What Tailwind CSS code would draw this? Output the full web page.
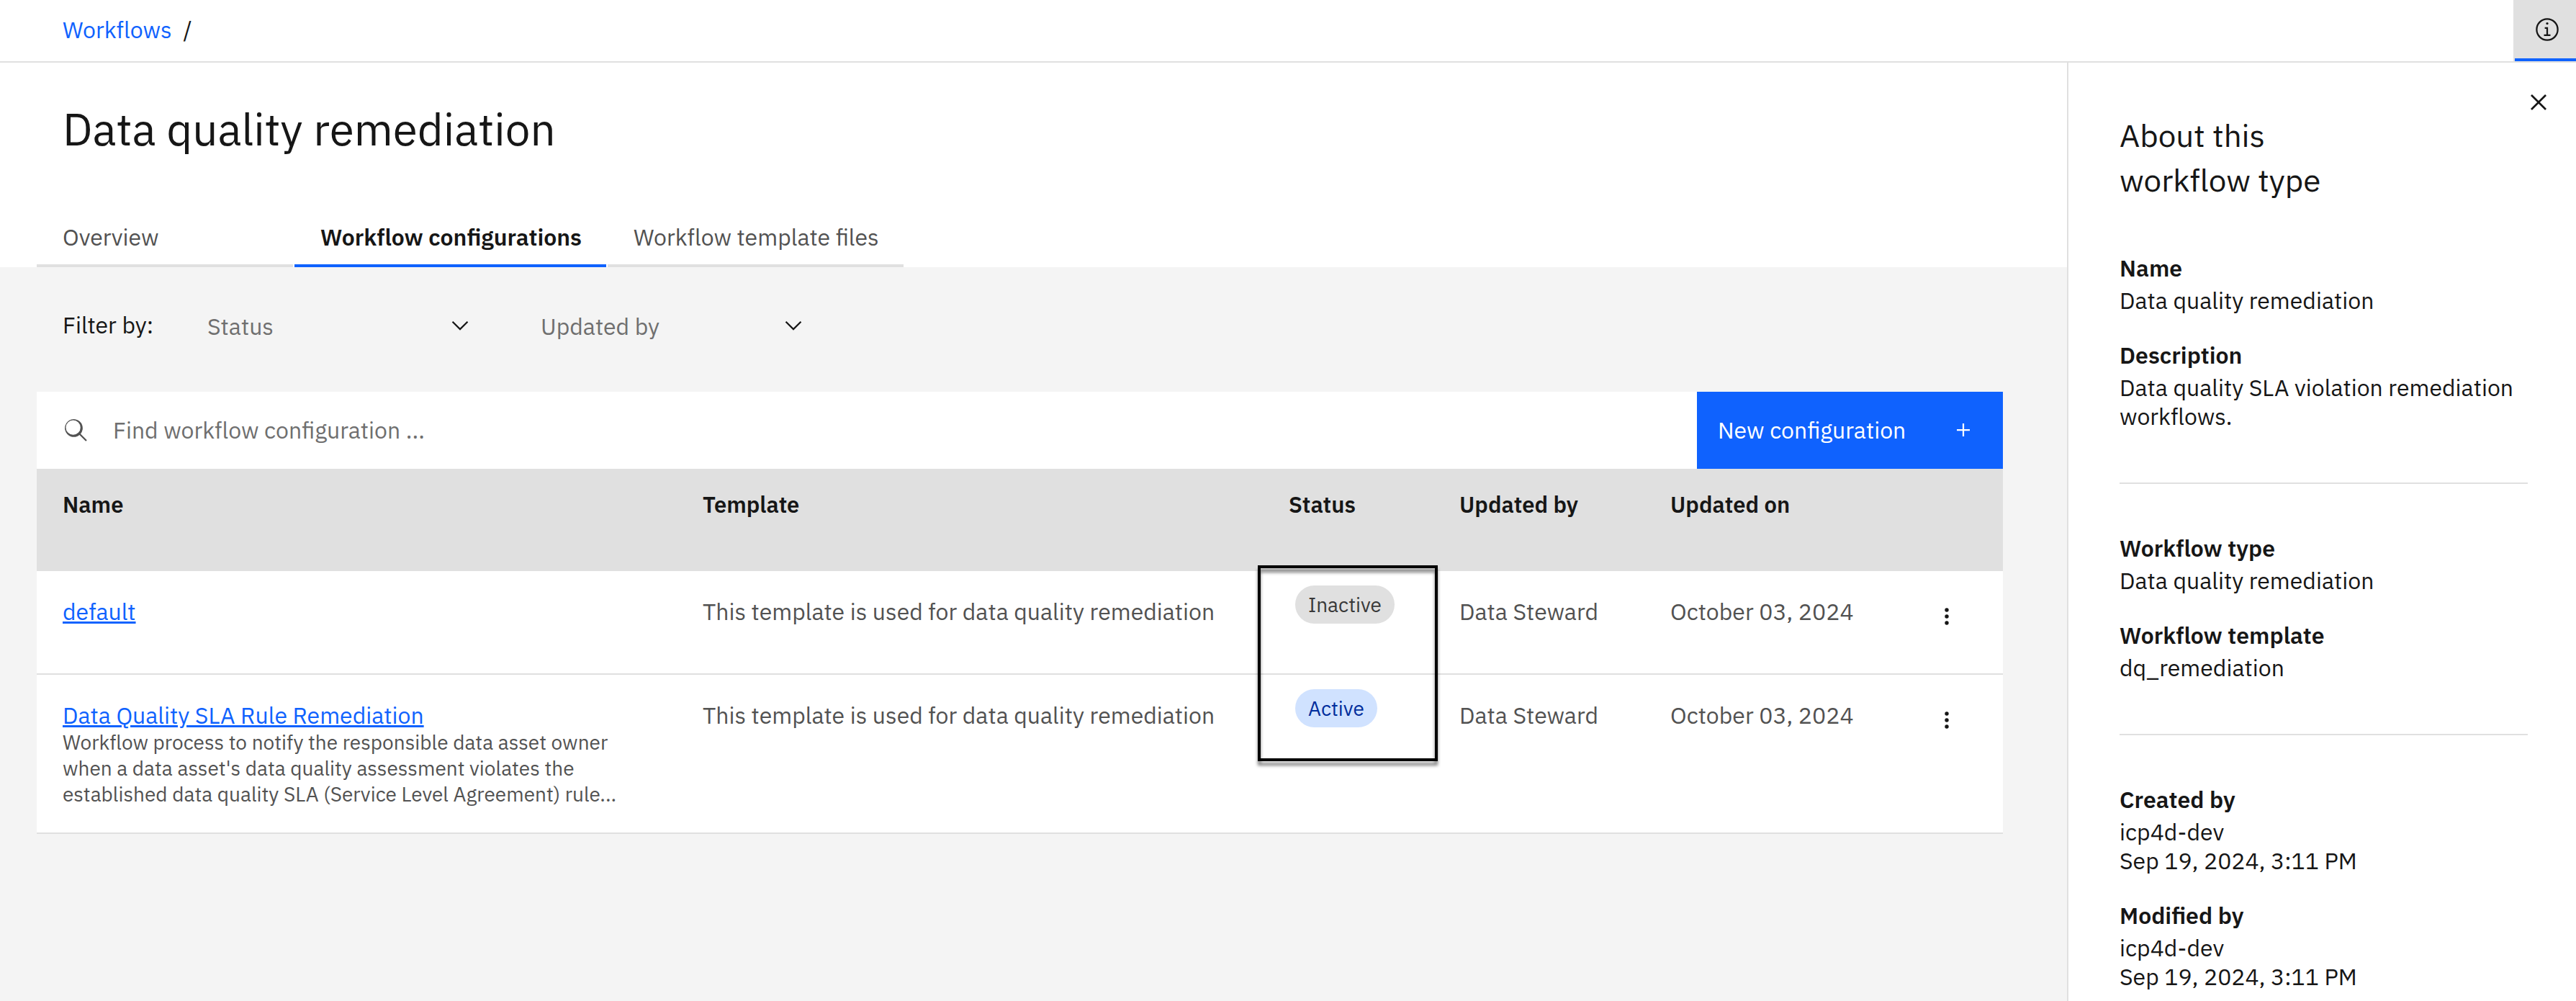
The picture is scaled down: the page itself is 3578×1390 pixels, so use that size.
<!DOCTYPE html>
<html lang="en">
<head>
<meta charset="utf-8">
<title>Data quality remediation</title>
<script src="https://cdn.jsdelivr.net/npm/@tailwindcss/browser@4"></script>
</head>
<body class="min-h-screen flex flex-col bg-white text-[#161616] font-['IBM_Plex_Sans','Roboto',sans-serif] text-[32px] leading-[40px]">
  <header class="flex items-stretch justify-between h-[87px] border-b-2 border-[#e0e0e0]">
    <nav aria-label="Breadcrumb" class="flex items-center gap-4 pl-[87px] pb-1">
      <a href="#" class="text-[#0f62fe]">Workflows</a>
      <span>/</span>
    </nav>
    <div class="flex border-l-2 border-[#e0e0e0]">
      <button aria-label="Information" class="w-[85px] flex items-center justify-center bg-[#e0e0e0] pl-1 border-b-4 border-[#0f62fe]">
        <svg class="size-9" viewBox="0 0 32 32" fill="currentColor"><path d="M17 22v-9h-4v2h2v7h-3v2h8v-2zM16 7a1.5 1.5 0 1 0 1.5 1.5A1.5 1.5 0 0 0 16 7z"/><path d="M16 30a14 14 0 1 1 14-14 14 14 0 0 1-14 14zm0-26a12 12 0 1 0 12 12A12 12 0 0 0 16 4z"/></svg>
      </button>
    </div>
  </header>

  <div class="flex grow">
    <main class="grow flex flex-col min-w-0">
      <h1 class="pt-14 pl-[87px] text-[62px] leading-[72px]">Data quality remediation</h1>
      <div role="tablist" class="flex gap-0.5 pl-[51px] mt-[67px]">
        <button role="tab" class="w-[356px] pt-[27px] pb-[18px] px-9 text-left text-[#525252] border-b-4 border-[#e0e0e0]">Overview</button>
        <button role="tab" aria-selected="true" class="w-[433px] pt-[27px] pb-[18px] px-9 text-left font-semibold border-b-4 border-[#0f62fe] whitespace-nowrap">Workflow configurations</button>
        <button role="tab" class="w-[411px] pt-[27px] pb-[18px] px-9 text-left text-[#525252] border-b-4 border-[#e0e0e0] whitespace-nowrap">Workflow template files</button>
      </div>

      <section class="grow bg-[#f4f4f4] pt-[37px] pl-[51px] pr-[89px]">
        <div class="flex items-center gap-9 pl-9">
          <span class="w-[129px] pb-1 whitespace-nowrap">Filter by:</span>
          <div class="relative w-[427px]">
            <select aria-label="Status" class="appearance-none w-full h-[89px] pl-9 text-[#6f6f6f] bg-transparent"><option>Status</option></select>
            <svg class="absolute right-[22px] top-[26px] size-9 pointer-events-none" viewBox="0 0 16 16" fill="currentColor"><path d="M8 11 3 6l.7-.7L8 9.6l4.3-4.3.7.7z"/></svg>
          </div>
          <div class="relative w-[427px]">
            <select aria-label="Updated by" class="appearance-none w-full h-[89px] pl-9 text-[#6f6f6f] bg-transparent"><option>Updated by</option></select>
            <svg class="absolute right-[22px] top-[26px] size-9 pointer-events-none" viewBox="0 0 16 16" fill="currentColor"><path d="M8 11 3 6l.7-.7L8 9.6l4.3-4.3.7.7z"/></svg>
          </div>
        </div>

        <div class="flex items-stretch h-[107px] mt-[47px] bg-white">
          <label class="grow flex items-center gap-[34px] pl-9 pb-0.5">
            <svg class="size-9 text-[#525252]" viewBox="0 0 16 16" fill="currentColor"><path d="m15 14.3-3.9-3.9a5.5 5.5 0 1 0-.7.7l3.9 3.9zM2 6.5a4.5 4.5 0 1 1 9 0 4.5 4.5 0 0 1-9 0z"/></svg>
            <input type="search" aria-label="Find workflow configuration" placeholder="Find workflow configuration ..." class="grow outline-none placeholder:text-[#6f6f6f]">
          </label>
          <button class="w-[425px] flex items-center justify-between pl-[29px] pr-[37px] pb-0.5 bg-[#0f62fe] text-white">New configuration
            <svg class="size-9" viewBox="0 0 32 32" fill="currentColor"><path d="M17 15V8h-2v7H8v2h7v7h2v-7h7v-2z"/></svg>
          </button>
        </div>

        <table class="w-full table-fixed border-separate border-spacing-0 text-left text-[#525252] bg-white">
          <colgroup><col class="w-[32.55%]"><col><col class="w-[237px]"><col class="w-[293px]"><col class="w-[341px]"><col class="w-[157px]"></colgroup>
          <thead class="bg-[#e0e0e0] text-[#161616] text-[31px]">
            <tr class="h-[142px] align-top">
              <th class="pt-[30px] pl-9 font-semibold">Name</th>
              <th class="pt-[30px] pl-9 font-semibold">Template</th>
              <th class="pt-[30px] pl-9 font-semibold">Status</th>
              <th class="pt-[30px] pl-9 font-semibold">Updated by</th>
              <th class="pt-[30px] pl-9 font-semibold">Updated on</th>
              <th aria-label="Actions"></th>
            </tr>
          </thead>
          <tbody>
            <tr class="h-[144px] align-top">
              <td class="pt-9 pl-9 border-b-2 border-[#e0e0e0]"><a href="#" class="text-[#0f62fe] underline">default</a></td>
              <td class="pt-9 pl-9 border-b-2 border-[#e0e0e0]">This template is used for data quality remediation</td>
              <td class="relative pt-5 pl-[45px] border-b-2 border-[#e0e0e0]">
                <span class="block w-fit px-[18px] pt-[7px] pb-[6px] rounded-full bg-[#e0e0e0] text-[#393939] text-[28px]">Inactive</span>
                <div class="absolute z-10 -left-[7px] -top-2 w-[250px] h-[272px] border-4 border-black drop-shadow-[0_6px_2px_rgba(0,0,0,0.5)] pointer-events-none"></div>
              </td>
              <td class="pt-9 pl-9 border-b-2 border-[#e0e0e0]">Data Steward</td>
              <td class="pt-9 pl-9 border-b-2 border-[#e0e0e0]">October 03, 2024</td>
              <td class="pt-[45px] border-b-2 border-[#e0e0e0]">
                <button aria-label="Options for default" class="block mx-auto text-[#161616]"><svg class="size-9" viewBox="0 0 32 32" fill="currentColor"><circle cx="16" cy="8" r="2.4"/><circle cx="16" cy="16" r="2.4"/><circle cx="16" cy="24" r="2.4"/></svg></button>
              </td>
            </tr>
            <tr class="h-[221px] align-top">
              <td class="pt-9 pl-9 border-b-2 border-[#e0e0e0]"><a href="#" class="text-[#0f62fe] underline">Data Quality SLA Rule Remediation</a>
                <p class="text-[28px] leading-[36px]">Workflow process to notify the responsible data asset owner<br>when a data asset's data quality assessment violates the<br>established data quality SLA (Service Level Agreement) rule...</p></td>
              <td class="pt-9 pl-9 border-b-2 border-[#e0e0e0]">This template is used for data quality remediation</td>
              <td class="pt-5 pl-[45px] border-b-2 border-[#e0e0e0]"><span class="block w-fit px-[18px] pt-[7px] pb-[6px] rounded-full bg-[#d0e2ff] text-[#002d9c] text-[28px]">Active</span></td>
              <td class="pt-9 pl-9 border-b-2 border-[#e0e0e0]">Data Steward</td>
              <td class="pt-9 pl-9 border-b-2 border-[#e0e0e0]">October 03, 2024</td>
              <td class="pt-[45px] border-b-2 border-[#e0e0e0]">
                <button aria-label="Options for Data Quality SLA Rule Remediation" class="block mx-auto text-[#161616]"><svg class="size-9" viewBox="0 0 32 32" fill="currentColor"><circle cx="16" cy="8" r="2.4"/><circle cx="16" cy="16" r="2.4"/><circle cx="16" cy="24" r="2.4"/></svg></button>
              </td>
            </tr>
          </tbody>
        </table>
      </section>
    </main>

    <aside class="relative shrink-0 w-[707px] border-l-2 border-[#e0e0e0] pt-[70px] pl-[71px] pr-[67px]">
      <button aria-label="Close" class="absolute right-[30px] top-[33px]"><svg class="size-11" viewBox="0 0 32 32" fill="currentColor"><path d="M24 9.4 22.6 8 16 14.6 9.4 8 8 9.4l6.6 6.6L8 22.6 9.4 24l6.6-6.6 6.6 6.6 1.4-1.4-6.6-6.6z"/></svg></button>
      <h2 class="text-[44px] leading-[62px]">About this<br>workflow type</h2>
      <dl class="mt-[71px] flex flex-col gap-9">
        <div><dt class="font-semibold">Name</dt><dd class="mt-[5px]">Data quality remediation</dd></div>
        <div><dt class="font-semibold">Description</dt><dd class="mt-[5px]">Data quality SLA violation remediation workflows.</dd></div>
      </dl>
      <hr class="mt-[72px] mb-[69px] border-t-2 border-[#e0e0e0]">
      <dl class="flex flex-col gap-9">
        <div><dt class="font-semibold">Workflow type</dt><dd class="mt-[5px]">Data quality remediation</dd></div>
        <div><dt class="font-semibold">Workflow template</dt><dd class="mt-[5px]">dq_remediation</dd></div>
      </dl>
      <hr class="mt-[72px] mb-[69px] border-t-2 border-[#e0e0e0]">
      <dl class="flex flex-col gap-9">
        <div><dt class="font-semibold">Created by</dt><dd class="mt-[5px]">icp4d-dev<br>Sep 19, 2024, 3:11 PM</dd></div>
        <div><dt class="font-semibold">Modified by</dt><dd class="mt-[5px]">icp4d-dev<br>Sep 19, 2024, 3:11 PM</dd></div>
      </dl>
    </aside>
  </div>
</body>
</html>
